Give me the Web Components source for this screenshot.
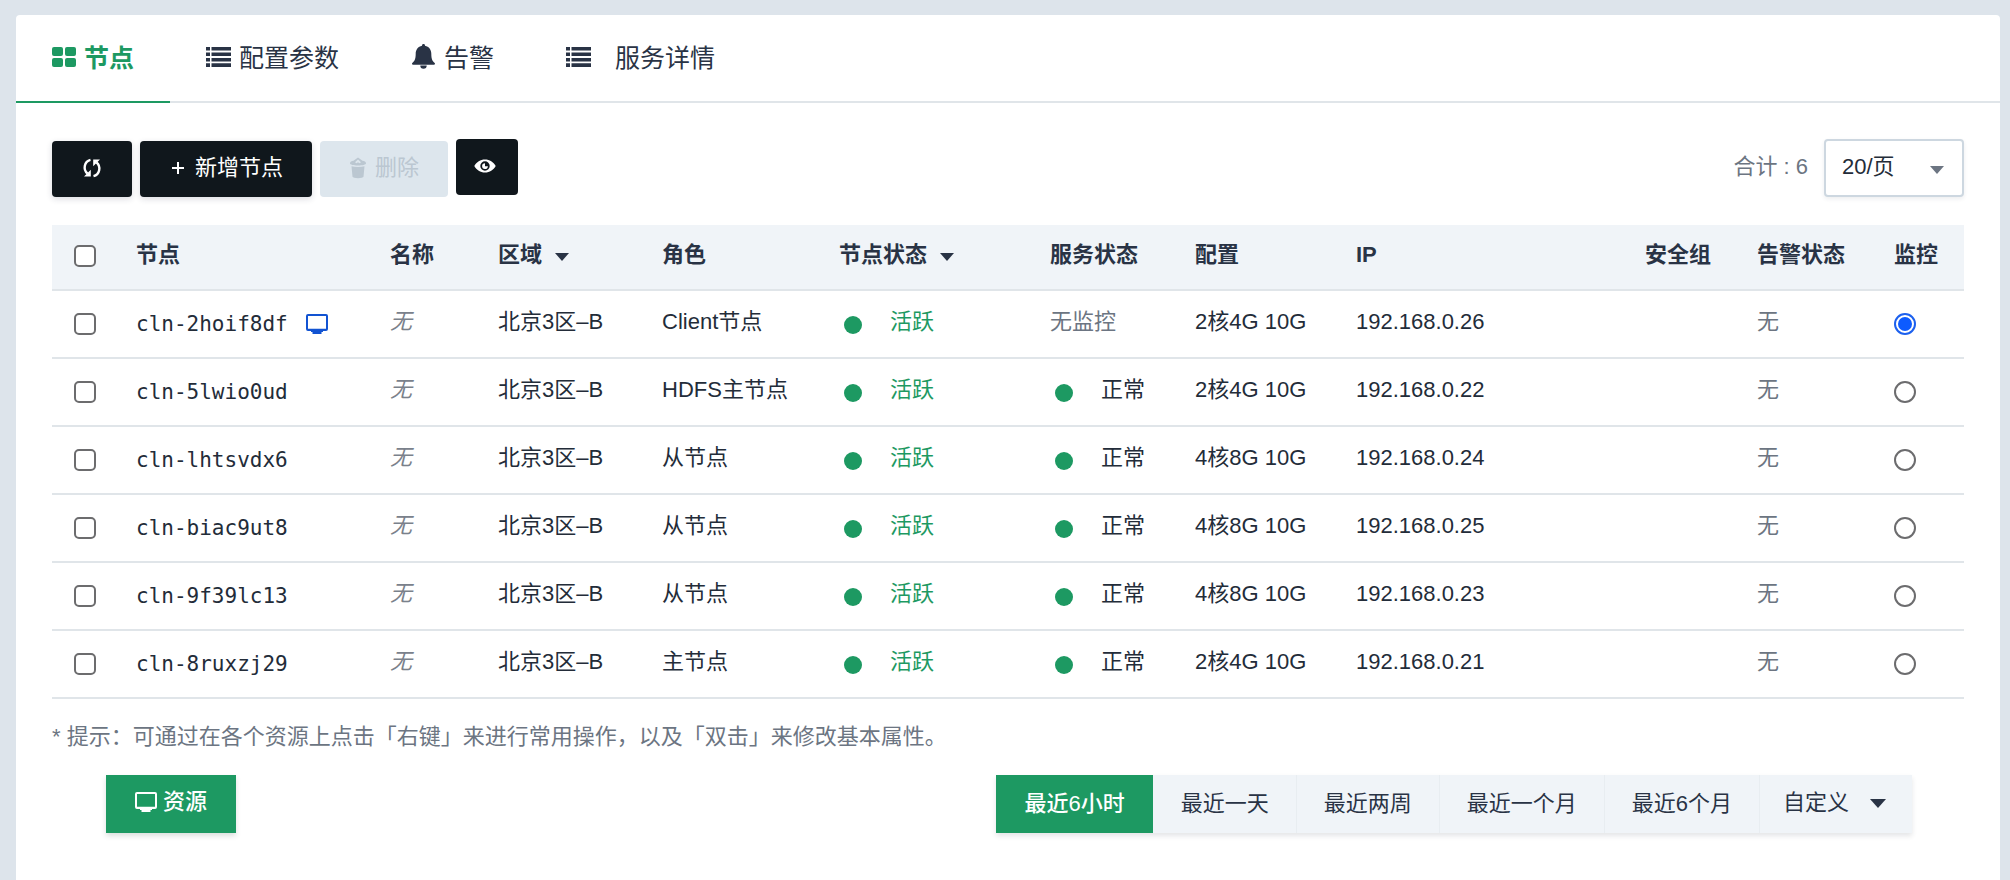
<!DOCTYPE html>
<html lang="zh-CN">
<head>
<meta charset="utf-8">
<meta name="viewport" content="width=device-width, initial-scale=1">
<title>集群节点</title>
<style>
  :root {
    --green: #1d9962;
    --ink: #232c39;
    --heading: #293345;
    --muted: #6c7582;
    --line: #e0e5e9;
    --panel: #f0f4f8;
    --page: #dde4eb;
    --dark: #10171c;
  }
  html { background: var(--page); }
  body {
    margin: 0;
    color: var(--ink);
    font: 22px/32px "Liberation Sans", "Noto Sans CJK SC", sans-serif;
  }
</style>
</head>
<body>
<cluster-page></cluster-page>

<script>
const define = (name, html, setup) => {
  const template = document.createElement('template');
  template.innerHTML = html;
  customElements.define(name, class extends HTMLElement {
    constructor() {
      super();
      this.attachShadow({ mode: 'open' }).append(template.content.cloneNode(true));
    }
    connectedCallback() { if (setup) setup.call(this, this.shadowRoot); }
  });
};

const icons = {
  grid: [24, 20, '<rect width="11" height="9" rx="2"/><rect x="13" width="11" height="9" rx="2"/><rect y="11" width="11" height="9" rx="2"/><rect x="13" y="11" width="11" height="9" rx="2"/>'],
  list: [25, 20, '<path d="M0 0h4v3.6H0zM5.5 0H25v3.6H5.500zM0 5.400h4V9H0zM5.500 5.400H25V9H5.500zM0 10.900h4v3.600H0zM5.500 10.900H25v3.600H5.500zM0 16.300h4V20H0zM5.500 16.300H25V20H5.500z"/>'],
  bell: [25, 26, '<path d="M12.500 0c1 0 1.500.700 1.500 1.700 4 .900 6.300 4 6.300 8 0 5.300 1.200 7.300 3.400 9.300.600.600.300 1.700-.700 1.700H2c-1 0-1.300-1.100-.700-1.700 2.200-2 3.400-4 3.400-9.300 0-4 2.300-7.100 6.300-8 0-1 .500-1.700 1.500-1.700z"/><path d="M9.300 21.600h6.400a3.200 3.200 0 0 1-6.400 0z"/>'],
  refresh: [22, 22, '<path d="M9.500 2.800C3.200 4.300 1.700 12.600 6.500 16.500M12.500 19.200c6.300-1.500 7.800-9.800 3-13.700" fill="none" stroke="currentColor" stroke-width="2.400"/><path d="M3 19.600h6.800v-6.800zM19 2.400h-6.800v6.800z"/>'],
  plus: [18, 18, '<path d="M8 3h2v5h5v2h-5v5H8v-5H3V8h5z"/>'],
  trash: [18, 22, '<path d="M1 6.500C1 4.600 2.600 4 4.500 3.800L9 .5l4.500 3.300c1.900.200 3.500.800 3.500 2.700 0 1.100-3.500 2-8 2s-8-.900-8-2z"/><path d="M6 5.200 9 2.600l3 2.600-1.500 1-1.500-1-1.500 1z" fill="#dde6ed"/><path d="M2.500 9.300c3.700 1 9.300 1 13 0l-1 10.500c-.200 1.900-10.800 1.900-11 0z"/>'],
  eye: [22, 14, '<path fill-rule="evenodd" d="M11 .5c4.700 0 8.400 2.600 10.700 6.500-2.300 3.900-6 6.500-10.700 6.500S2.600 10.900.300 7C2.600 3.100 6.300.500 11 .500zM11 2.300a4.700 4.700 0 1 0 0 9.400 4.700 4.700 0 0 0 0-9.400z"/><path d="M11 4.200v3h2.900A2.900 2.900 0 1 1 11 4.200z"/>'],
  screen: [22, 20, '<path fill-rule="evenodd" d="M2 0h18a2 2 0 0 1 2 2v13a2 2 0 0 1-2 2h-3v1H15.500V20h-9v-2H5V17H2a2 2 0 0 1-2-2V2a2 2 0 0 1 2-2zm0 2v12.800h18V2z"/>'],
  caret: [14, 8, '<path d="M0 0h14L7 8z"/>'],
  drop: [18, 9, '<path d="M1 0h16L9 9z"/>']
};

define('ui-icon', `
  <style>
    :host { display: inline-flex; flex: none; }
    svg { display: block; fill: currentColor; }
  </style>
  <svg aria-hidden="true"></svg>`,
function (root) {
  const [w, h, body] = icons[this.getAttribute('name')];
  const svg = root.querySelector('svg');
  svg.setAttribute('viewBox', `0 0 ${w} ${h}`);
  svg.setAttribute('width', w);
  svg.setAttribute('height', h);
  svg.innerHTML = body;
});

define('ui-button', `
  <style>
    :host { display: inline-flex; }
    button {
      display: flex; align-items: center; justify-content: center; gap: 8px;
      height: 56px; padding: 0 29px 2px; border: 0; border-radius: 4px;
      background: var(--dark); color: #fff; font: inherit; white-space: nowrap;
      box-shadow: 0 2px 6px rgba(30, 40, 70, .16);
    }
    :host([compact]) button { padding: 0 22px 2px 18px; box-shadow: none; }
    :host([disabled]) button { background: #dde6ed; color: #bbc7d1; box-shadow: none; }
    :host([primary]) button {
      gap: 6px; height: 58px; padding: 0 29px 4px; border-radius: 0;
      background: var(--green); font-weight: 500;
      box-shadow: 0 3px 5px rgba(30, 60, 50, .16);
    }
  </style>
  <button type="button"><slot></slot></button>`,
function (root) {
  const button = root.querySelector('button');
  button.disabled = this.hasAttribute('disabled');
  if (this.hasAttribute('label')) button.setAttribute('aria-label', this.getAttribute('label'));
});

define('tab-item', `
  <style>
    :host { display: flex; margin-bottom: -2px; }
    button {
      display: flex; align-items: center; gap: 8px;
      height: 88px; padding: 0 36px; border: 0; border-bottom: 2px solid transparent;
      background: none; color: var(--heading); font: inherit; font-size: 25px; white-space: nowrap;
    }
    :host([active]) button { color: var(--green); border-color: var(--green); font-weight: 600; }
    :host([spaced]) button { gap: 24px; }
    ::slotted(ui-icon) { padding-bottom: 3px; }
  </style>
  <button type="button" role="tab"><slot name="icon"></slot><slot></slot></button>`,
function (root) {
  root.querySelector('button').setAttribute('aria-selected', this.hasAttribute('active'));
});

define('tab-bar', `
  <style>
    :host { display: flex; height: 86px; border-bottom: 2px solid var(--line); }
    div { display: flex; }
  </style>
  <div role="tablist"><slot></slot></div>`);

define('page-size', `
  <style>
    :host { display: flex; align-items: center; gap: 16px; color: var(--muted); }
    span { padding-bottom: 2px; }
    .box { display: grid; align-items: center; width: 140px; }
    .box > * { grid-area: 1 / 1; }
    select {
      appearance: none; width: 100%; height: 58px; padding: 0 40px 2px 16px;
      border: 2px solid #cdd7e0; border-radius: 4px; background: #fff;
      color: var(--ink); font: inherit;
      box-shadow: 0 2px 4px rgba(30, 40, 60, .08);
    }
    ui-icon { justify-self: end; padding: 3px 20px 0 0; pointer-events: none; }
  </style>
  <span>合计 : 6</span>
  <div class="box">
    <select aria-label="每页数量"><option>20/页</option><option>50/页</option></select>
    <ui-icon name="caret"></ui-icon>
  </div>`);

define('status-dot', `
  <style>
    :host { display: flex; align-items: center; gap: 28px; padding-left: 5px; }
    i { width: 18px; height: 18px; margin-top: 5px; border-radius: 50%; background: var(--green); }
    :host([tone=green]) { color: var(--green); }
  </style>
  <i></i><slot></slot>`);

define('node-table', `
  <style>
    :host { display: block; }
    table { width: 100%; table-layout: fixed; border-collapse: separate; border-spacing: 0; }
    th, td {
      box-sizing: border-box; padding: 0 0 4px 22px; border-bottom: 2px solid var(--line);
      text-align: left; white-space: nowrap;
    }
    th { height: 66px; background: var(--panel); color: var(--heading); font-weight: 600; }
    td { height: 68px; }
    td.pick, td.id { padding-bottom: 0; }
    th.pick { padding-bottom: 2px; }
    td.id { font: 21px/32px "DejaVu Sans Mono", monospace; }
    td.id span { display: flex; align-items: center; gap: 18px; }
    td.id ui-icon { color: #1253d2; }
    .muted { color: var(--muted); }
    .muted em { color: #7a818b; }
    th span { display: flex; align-items: center; gap: 13px; }
    th ui-icon { padding-top: 3px; }
    input {
      appearance: none; display: block; box-sizing: border-box; width: 22px; height: 22px; margin: 0;
      border: 2px solid #6c6c6e; background: #fff;
    }
    input[type=checkbox] { border-radius: 5px; }
    input[type=radio] { border-radius: 50%; }
    input[type=radio]:checked { border-color: #1c60ee; background: #0d5bff content-box; padding: 2px; }
    .check { width: 62px; } .node { width: 254px; } .name { width: 108px; } .zone { width: 164px; }
    .role { width: 177px; } .state { width: 211px; } .service { width: 145px; } .spec { width: 161px; }
    .group { width: 112px; } .alarm { width: 137px; } .watch { width: 92px; }
  </style>
  <table>
    <colgroup>
      <col class="check"><col class="node"><col class="name"><col class="zone"><col class="role"><col class="state">
      <col class="service"><col class="spec"><col><col class="group"><col class="alarm"><col class="watch">
    </colgroup>
    <thead>
      <tr>
        <th class="pick"><input type="checkbox" aria-label="全选"></th>
        <th>节点</th><th>名称</th>
        <th><span>区域<ui-icon name="caret"></ui-icon></span></th>
        <th>角色</th>
        <th><span>节点状态<ui-icon name="caret"></ui-icon></span></th>
        <th>服务状态</th><th>配置</th><th>IP</th><th>安全组</th><th>告警状态</th><th>监控</th>
      </tr>
    </thead>
    <tbody></tbody>
  </table>`,
function (root) {
  const rows = [
    ['cln-2hoif8df', 'Client节点', '', '2核4G 10G', '192.168.0.26'],
    ['cln-5lwio0ud', 'HDFS主节点', '正常', '2核4G 10G', '192.168.0.22'],
    ['cln-lhtsvdx6', '从节点', '正常', '4核8G 10G', '192.168.0.24'],
    ['cln-biac9ut8', '从节点', '正常', '4核8G 10G', '192.168.0.25'],
    ['cln-9f39lc13', '从节点', '正常', '4核8G 10G', '192.168.0.23'],
    ['cln-8ruxzj29', '主节点', '正常', '2核4G 10G', '192.168.0.21']
  ];
  root.querySelector('tbody').innerHTML = rows.map(([id, role, service, spec, ip], i) => `
    <tr>
      <td class="pick"><input type="checkbox" aria-label="选择 ${id}"></td>
      <td class="id"><span>${id}${i ? '' : '<ui-icon name="screen"></ui-icon>'}</span></td>
      <td class="muted"><em>无</em></td>
      <td>北京3区–B</td>
      <td>${role}</td>
      <td><status-dot tone="green">活跃</status-dot></td>
      <td${service ? '' : ' class="muted"'}>${service ? `<status-dot>${service}</status-dot>` : '无监控'}</td>
      <td>${spec}</td>
      <td>${ip}</td>
      <td></td>
      <td class="muted">无</td>
      <td class="pick"><input type="radio" name="watch" aria-label="监控 ${id}"${i ? '' : ' checked'}></td>
    </tr>`).join('');
});

define('range-picker', `
  <style>
    :host { display: flex; box-shadow: 0 3px 5px rgba(30, 40, 60, .12); }
    button {
      display: flex; align-items: center; height: 58px; padding: 0 27px; border: 0;
      border-left: 1px solid #e8edf1; background: var(--panel); color: var(--heading);
      font: inherit; white-space: nowrap;
    }
    button.on { padding: 0 28px; border: 0; background: var(--green); color: #fff; font-weight: 500; }
    button.on + button { border-color: var(--panel); }
    button.more { gap: 20px; padding: 0 25px 2px 23px; }
  </style>
  <button type="button" class="on" aria-pressed="true">最近6小时</button>
  <button type="button">最近一天</button>
  <button type="button">最近两周</button>
  <button type="button">最近一个月</button>
  <button type="button">最近6个月</button>
  <button type="button" class="more" aria-haspopup="true">自定义<ui-icon name="drop"></ui-icon></button>`);

define('cluster-page', `
  <style>
    :host { display: flex; flex-direction: column; box-sizing: border-box; min-height: 100vh; padding: 15px 10px 0 16px; }
    main { flex: 1; background: #fff; border-radius: 4px 4px 0 0; }
    .body { padding: 36px; }
    .tools { display: flex; align-items: flex-end; gap: 8px; margin-bottom: 28px; }
    .tools ui-button[compact] { align-self: flex-start; }
    page-size { margin-left: auto; }
    p { margin: 22px 0; color: var(--muted); }
    .monitor { display: flex; justify-content: space-between; align-items: flex-start; padding: 0 52px 0 54px; }
  </style>
  <main>
    <tab-bar>
      <tab-item active><ui-icon slot="icon" name="grid"></ui-icon>节点</tab-item>
      <tab-item><ui-icon slot="icon" name="list"></ui-icon>配置参数</tab-item>
      <tab-item><ui-icon slot="icon" name="bell"></ui-icon>告警</tab-item>
      <tab-item spaced><ui-icon slot="icon" name="list"></ui-icon>服务详情</tab-item>
    </tab-bar>
    <div class="body">
      <div class="tools">
        <ui-button label="刷新"><ui-icon name="refresh"></ui-icon></ui-button>
        <ui-button><ui-icon name="plus"></ui-icon>新增节点</ui-button>
        <ui-button disabled><ui-icon name="trash"></ui-icon>删除</ui-button>
        <ui-button compact label="显示列"><ui-icon name="eye"></ui-icon></ui-button>
        <page-size></page-size>
      </div>
      <node-table></node-table>
      <p>* 提示：可通过在各个资源上点击「右键」来进行常用操作，以及「双击」来修改基本属性。</p>
      <div class="monitor">
        <ui-button primary><ui-icon name="screen"></ui-icon>资源</ui-button>
        <range-picker></range-picker>
      </div>
    </div>
  </main>`);
</script>
</body>
</html>
